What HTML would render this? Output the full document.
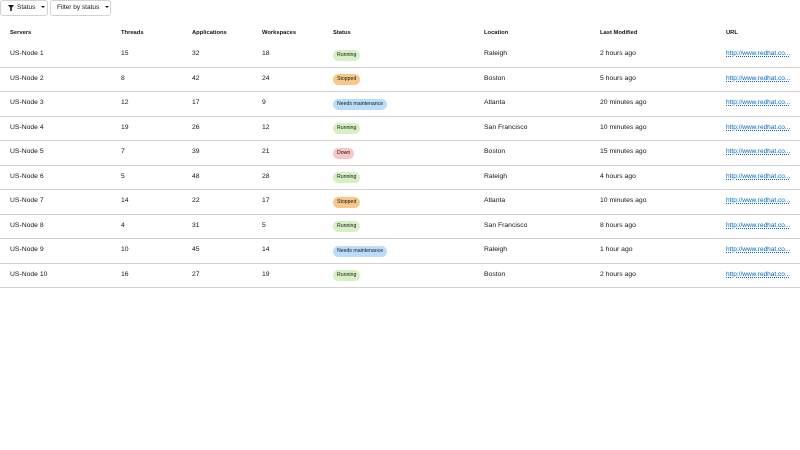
<!DOCTYPE html>
<html><head><style>
body{margin:0;width:800px;height:450px;background:#fff;font-family:"Liberation Sans",sans-serif;color:#151515;position:relative;overflow:hidden}
.btn{position:absolute;top:0;height:14px;border:1px solid #d2d2d2;border-radius:3px;font-size:6.5px;line-height:14px;color:#151515;box-sizing:content-box}
.caret{display:inline-block;width:0;height:0;border-left:2.2px solid transparent;border-right:2.2px solid transparent;border-top:2.6px solid #151515;vertical-align:middle;margin-left:6px}
.c{position:absolute;font-size:6.8px;white-space:nowrap}
.h{font-weight:bold;font-size:5.8px;top:29.5px}
.sep{position:absolute;left:0;width:800px;height:1px;background:#d2d2d2}
.b{position:absolute;height:11px;line-height:11.5px;border-radius:6px;padding:0 4px;font-size:5.2px;color:#151515}
.run{background:#d5f0c2}.stop{background:#f7c889}.need{background:#bcdcfb}.down{background:#f9c6c6}
a{color:#0066cc;text-decoration:underline dotted;font-size:6.5px}
</style></head><body>
<div class="btn" style="left:0;width:46px"><svg style="position:absolute;left:7px;top:4px" width="6" height="6" viewBox="0 0 6 6"><path d="M0 0H6L3.8 2.6V6H2.2V2.6Z" fill="#151515"/></svg><span style="position:absolute;left:16px">Status<span class="caret"></span></span></div>
<div class="btn" style="left:50px;width:59px"><span style="position:absolute;left:6px">Filter by status<span class="caret"></span></span></div>
<div class="c h" style="left:10px">Servers</div>
<div class="c h" style="left:121px">Threads</div>
<div class="c h" style="left:192px">Applications</div>
<div class="c h" style="left:262px">Workspaces</div>
<div class="c h" style="left:333px">Status</div>
<div class="c h" style="left:484px">Location</div>
<div class="c h" style="left:600px">Last Modified</div>
<div class="c h" style="left:726px">URL</div>
<div id="rows"></div>
<script>
var d=[["US-Node 1",15,32,18,"Running","run","Raleigh","2 hours ago"],
["US-Node 2",8,42,24,"Stopped","stop","Boston","5 hours ago"],
["US-Node 3",12,17,9,"Needs maintenance","need","Atlanta","20 minutes ago"],
["US-Node 4",19,26,12,"Running","run","San Francisco","10 minutes ago"],
["US-Node 5",7,39,21,"Down","down","Boston","15 minutes ago"],
["US-Node 6",5,48,28,"Running","run","Raleigh","4 hours ago"],
["US-Node 7",14,22,17,"Stopped","stop","Atlanta","10 minutes ago"],
["US-Node 8",4,31,5,"Running","run","San Francisco","8 hours ago"],
["US-Node 9",10,45,14,"Needs maintenance","need","Raleigh","1 hour ago"],
["US-Node 10",16,27,19,"Running","run","Boston","2 hours ago"]];
var h="";
d.forEach(function(r,i){var cy=54+i*24.5;var t=cy-3.8;
h+='<div class="c" style="left:10px;top:'+t+'px">'+r[0]+'</div>';
h+='<div class="c" style="left:121px;top:'+t+'px">'+r[1]+'</div>';
h+='<div class="c" style="left:192px;top:'+t+'px">'+r[2]+'</div>';
h+='<div class="c" style="left:262px;top:'+t+'px">'+r[3]+'</div>';
h+='<div class="b '+r[5]+'" style="left:333px;top:'+(cy-4.5)+'px">'+r[4]+'</div>';
h+='<div class="c" style="left:484px;top:'+t+'px">'+r[6]+'</div>';
h+='<div class="c" style="left:600px;top:'+t+'px">'+r[7]+'</div>';
h+='<div class="c" style="left:726px;top:'+t+'px"><a>http://www.redhat.co...</a></div>';
h+='<div class="sep" style="top:'+(cy+12.5)+'px"></div>';});
document.getElementById("rows").innerHTML=h;
</script>
</body></html>
